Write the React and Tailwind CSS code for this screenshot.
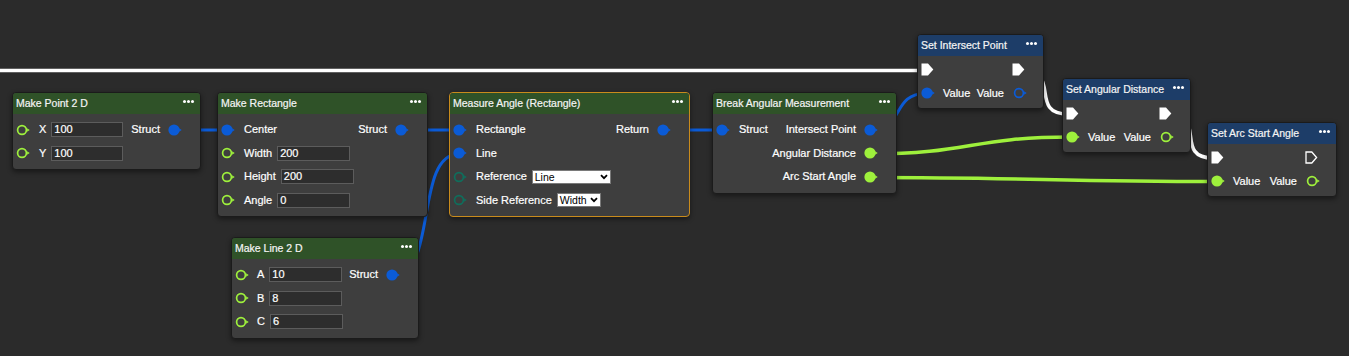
import React from "react";

const BLUE = "#0b5bd6";
const GREEN = "#9ef03c";
const TEAL = "#0f6e5c";

function Pin({ color, filled }) {
  return (
    <svg width="15" height="12" viewBox="0 0 15 12" className="shrink-0 block">
      {filled ? (
        <circle cx="6" cy="6" r="5.6" fill={color} />
      ) : (
        <circle cx="6" cy="6" r="4.4" fill="none" stroke={color} strokeWidth="1.7" />
      )}
      <path d="M11.1 4.2 L13.7 6 L11.1 7.8 Z" fill={color} />
    </svg>
  );
}

function Exec({ filled = true }) {
  return (
    <svg width="13" height="13" viewBox="0 0 13 13" className="shrink-0 block">
      {filled ? (
        <path d="M0.5 0.5 H7 L12.3 6.5 L7 12.5 H0.5 Z" fill="#ffffff" />
      ) : (
        <path d="M1 1 H6.8 L11.6 6.5 L6.8 12 H1 Z" fill="none" stroke="#ffffff" strokeWidth="1.3" />
      )}
    </svg>
  );
}

function Dots() {
  return (
    <div className="flex gap-[1px] -mt-[4px]">
      <span className="w-[3px] h-[3px] rounded-full bg-white" />
      <span className="w-[3px] h-[3px] rounded-full bg-white" />
      <span className="w-[3px] h-[3px] rounded-full bg-white" />
    </div>
  );
}

function Node({ pos, title, blue, selected, pad, children }) {
  return (
    <div
      className={
        "absolute border rounded-[4px] bg-[#3e3e3e] shadow-[0_2px_5px_rgba(0,0,0,0.45)] overflow-hidden " +
        (selected ? "border-[#c98b1c] " : "border-[#1b1b1b] ") +
        pos
      }
    >
      <div
        className={
          "h-[21px] flex items-center justify-between pl-[3px] pr-[6px] text-[10.5px] text-[#f4f4f4] [-webkit-text-stroke:0.2px_#f4f4f4] " +
          (blue ? "bg-[#1d3d68]" : "bg-[#2f5228]")
        }
      >
        <span className="leading-none">{title}</span>
        <Dots />
      </div>
      <div className={"pl-[3px] " + pad}>{children}</div>
    </div>
  );
}

function Row({ children }) {
  return <div className="flex h-[23.5px] items-center justify-between">{children}</div>;
}

function L({ children }) {
  return <div className="flex items-center">{children}</div>;
}

function Label({ children, cls = "" }) {
  return (
    <span className={"text-[11px] leading-none text-white whitespace-nowrap [-webkit-text-stroke:0.2px_#ffffff] " + cls}>
      {children}
    </span>
  );
}

function Input({ value, w }) {
  return (
    <div
      className={
        "ml-[5px] h-[15px] border border-[#5c5c5c] bg-[#2d2d2d] text-[11px] leading-[13px] text-white pl-[2px] [-webkit-text-stroke:0.2px_#ffffff] " +
        w
      }
    >
      {value}
    </div>
  );
}

function Chevron() {
  return (
    <svg width="8" height="6" viewBox="0 0 8 6" className="block shrink-0">
      <path d="M1 1.2 L4 4.2 L7 1.2" fill="none" stroke="#000" strokeWidth="1.8" />
    </svg>
  );
}

function Select({ value, w }) {
  return (
    <div
      className={
        "ml-[5px] h-[14px] border border-[#7a7a7a] bg-white flex items-center justify-between pl-[2px] pr-[2px] text-[10.5px] leading-none text-black " +
        w
      }
    >
      <span>{value}</span>
      <Chevron />
    </div>
  );
}

function bez(x1, y1, x2, y2, dx) {
  return `M${x1} ${y1} C${x1 + dx} ${y1} ${x2 - dx} ${y2} ${x2} ${y2}`;
}

export default function App() {
  return (
    <div className="relative w-[1349px] h-[356px] overflow-hidden bg-[#2b2b2b] font-['Liberation_Sans',Arial,sans-serif]">
      <svg className="absolute left-0 top-0" width="1349" height="356">
        <path d="M-5 70.5 L923 70.5" stroke="#ffffff" strokeWidth="3.5" fill="none" />
        <path d={bez(1022, 70.5, 1068, 114, 40)} stroke="#ffffff" strokeWidth="3.5" fill="none" />
        <path d={bez(1168, 114, 1213, 158, 40)} stroke="#ffffff" strokeWidth="3.5" fill="none" />
        <path d="M173 130 L227 130" stroke={BLUE} strokeWidth="3" fill="none" />
        <path d="M401 130 L459 130" stroke={BLUE} strokeWidth="3" fill="none" />
        <path d="M663 130 L722 130" stroke={BLUE} strokeWidth="3" fill="none" />
        <path d={bez(393, 276, 459, 154, 45)} stroke={BLUE} strokeWidth="3" fill="none" />
        <path d={bez(870, 130, 926, 93.5, 35)} stroke={BLUE} strokeWidth="3" fill="none" />
        <path d={bez(870, 154, 1071, 137, 100)} stroke={GREEN} strokeWidth="3.5" fill="none" />
        <path d={bez(870, 177.5, 1216, 181.5, 150)} stroke={GREEN} strokeWidth="3.5" fill="none" />
      </svg>

      <Node pos="left-[12px] top-[92px] w-[189px]" title="Make Point 2 D" pad="pt-[4px] pb-[4px] pr-[17px]">
        <Row>
          <L>
            <Pin color={GREEN} />
            <Label cls="ml-[8px]">X</Label>
            <Input value="100" w="w-[72px]" />
          </L>
          <L>
            <Label>Struct</Label>
            <span className="w-[8px]" />
            <Pin color={BLUE} filled />
          </L>
        </Row>
        <Row>
          <L>
            <Pin color={GREEN} />
            <Label cls="ml-[8px]">Y</Label>
            <Input value="100" w="w-[72px]" />
          </L>
        </Row>
      </Node>

      <Node pos="left-[217px] top-[92px] w-[211px]" title="Make Rectangle" pad="pt-[4px] pb-[4px] pr-[17px]">
        <Row>
          <L>
            <Pin color={BLUE} filled />
            <Label cls="ml-[8px]">Center</Label>
          </L>
          <L>
            <Label>Struct</Label>
            <span className="w-[8px]" />
            <Pin color={BLUE} filled />
          </L>
        </Row>
        <Row>
          <L>
            <Pin color={GREEN} />
            <Label cls="ml-[8px]">Width</Label>
            <Input value="200" w="w-[73px]" />
          </L>
        </Row>
        <Row>
          <L>
            <Pin color={GREEN} />
            <Label cls="ml-[8px]">Height</Label>
            <Input value="200" w="w-[73px]" />
          </L>
        </Row>
        <Row>
          <L>
            <Pin color={GREEN} />
            <Label cls="ml-[8px]">Angle</Label>
            <Input value="0" w="w-[73px]" />
          </L>
        </Row>
      </Node>

      <Node pos="left-[231px] top-[237px] w-[188px]" title="Make Line 2 D" pad="pt-[4px] pb-[4px] pr-[17px]">
        <Row>
          <L>
            <Pin color={GREEN} />
            <Label cls="ml-[7px]">A</Label>
            <Input value="10" w="w-[73px]" />
          </L>
          <L>
            <Label>Struct</Label>
            <span className="w-[8px]" />
            <Pin color={BLUE} filled />
          </L>
        </Row>
        <Row>
          <L>
            <Pin color={GREEN} />
            <Label cls="ml-[7px]">B</Label>
            <Input value="8" w="w-[73px]" />
          </L>
        </Row>
        <Row>
          <L>
            <Pin color={GREEN} />
            <Label cls="ml-[7px]">C</Label>
            <Input value="6" w="w-[73px]" />
          </L>
        </Row>
      </Node>

      <Node pos="left-[449px] top-[92px] w-[241px]" title="Measure Angle (Rectangle)" selected pad="pt-[4px] pb-[4px] pr-[17px]">
        <Row>
          <L>
            <Pin color={BLUE} filled />
            <Label cls="ml-[8px]">Rectangle</Label>
          </L>
          <L>
            <Label>Return</Label>
            <span className="w-[8px]" />
            <Pin color={BLUE} filled />
          </L>
        </Row>
        <Row>
          <L>
            <Pin color={BLUE} filled />
            <Label cls="ml-[8px]">Line</Label>
          </L>
        </Row>
        <Row>
          <L>
            <Pin color={TEAL} />
            <Label cls="ml-[8px]">Reference</Label>
            <Select value="Line" w="w-[79px]" />
          </L>
        </Row>
        <Row>
          <L>
            <Pin color={TEAL} />
            <Label cls="ml-[8px]">Side Reference</Label>
            <Select value="Width" w="w-[44px]" />
          </L>
        </Row>
      </Node>

      <Node pos="left-[712px] top-[92px] w-[185px]" title="Break Angular Measurement" pad="pt-[4px] pb-[4px] pr-[17px]">
        <Row>
          <L>
            <Pin color={BLUE} filled />
            <Label cls="ml-[8px]">Struct</Label>
          </L>
          <L>
            <Label>Intersect Point</Label>
            <span className="w-[8px]" />
            <Pin color={BLUE} filled />
          </L>
        </Row>
        <Row>
          <span />
          <L>
            <Label>Angular Distance</Label>
            <span className="w-[8px]" />
            <Pin color={GREEN} filled />
          </L>
        </Row>
        <Row>
          <span />
          <L>
            <Label>Arc Start Angle</Label>
            <span className="w-[8px]" />
            <Pin color={GREEN} filled />
          </L>
        </Row>
      </Node>

      <Node pos="left-[917px] top-[34px] w-[127px]" title="Set Intersect Point" blue pad="pt-[2px] pb-[3px] pr-[15px]">
        <Row>
          <Exec />
          <span className="mr-[3px]">
            <Exec />
          </span>
        </Row>
        <Row>
          <L>
            <Pin color={BLUE} filled />
            <Label cls="ml-[7px]">Value</Label>
          </L>
          <L>
            <Label>Value</Label>
            <span className="w-[9px]" />
            <Pin color={BLUE} />
          </L>
        </Row>
      </Node>

      <Node pos="left-[1062px] top-[78px] w-[129px]" title="Set Angular Distance" blue pad="pt-[2px] pb-[3px] pr-[15px]">
        <Row>
          <Exec />
          <span className="mr-[3px]">
            <Exec />
          </span>
        </Row>
        <Row>
          <L>
            <Pin color={GREEN} filled />
            <Label cls="ml-[7px]">Value</Label>
          </L>
          <L>
            <Label>Value</Label>
            <span className="w-[9px]" />
            <Pin color={GREEN} />
          </L>
        </Row>
      </Node>

      <Node pos="left-[1207px] top-[122px] w-[130px]" title="Set Arc Start Angle" blue pad="pt-[2px] pb-[3px] pr-[15px]">
        <Row>
          <Exec />
          <span className="mr-[3px]">
            <Exec filled={false} />
          </span>
        </Row>
        <Row>
          <L>
            <Pin color={GREEN} filled />
            <Label cls="ml-[7px]">Value</Label>
          </L>
          <L>
            <Label>Value</Label>
            <span className="w-[9px]" />
            <Pin color={GREEN} />
          </L>
        </Row>
      </Node>
    </div>
  );
}
